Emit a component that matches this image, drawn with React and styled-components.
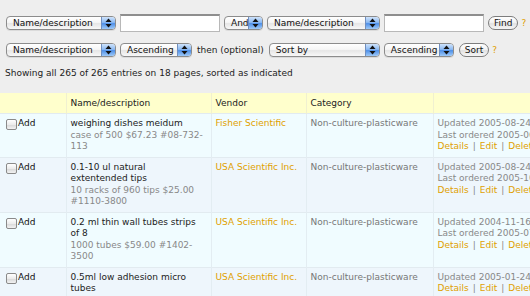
import React from 'react';
import styled, { createGlobalStyle } from 'styled-components';

const GlobalStyle = createGlobalStyle`
  html, body {
    margin: 0;
    padding: 0;
    background: #eeeeee;
    overflow: hidden;
  }
  body {
    font-family: "DejaVu Sans", Verdana, sans-serif;
    font-size: 9px;
    color: #222;
  }
`;

const Page = styled.div`
  padding-top: 14px;
  width: 530px;
`;

const Form = styled.div`
  padding-left: 6px;
  display: flex;
  flex-direction: column;
  gap: 9px;
`;

const FormRow = styled.div`
  display: flex;
  align-items: center;
  height: 18px;
  gap: 4px;
`;

const Popup = styled.div`
  display: inline-flex;
  align-items: stretch;
  box-sizing: border-box;
  width: ${({ $w }) => $w}px;
  height: 14px;
  border: 1px solid #8c8c8c;
  border-radius: 4px;
  overflow: hidden;
  background: linear-gradient(#ffffff, #f6f6f6 45%, #e6e6e6 55%, #f8f8f8);
  box-shadow: 0 1px 0 rgba(0, 0, 0, 0.08);
  flex-shrink: 0;
`;

const PopupLabel = styled.span`
  flex: 1;
  padding-left: 6px;
  line-height: 12px;
  white-space: nowrap;
  overflow: hidden;
  color: #111;
`;

const PopupArrow = styled.span`
  width: 13px;
  display: flex;
  align-items: center;
  justify-content: center;
  border-left: 1px solid #6f8fc0;
  background: linear-gradient(#cfe3fb, #8cbaf3 45%, #4f90e8 55%, #9fcaf8);
`;

const TextBox = styled.div`
  box-sizing: border-box;
  width: ${({ $w }) => $w}px;
  height: 18px;
  background: #fff;
  border: 1px solid #b8b8b8;
  border-top: 2px solid #8e8e8e;
  flex-shrink: 0;
`;

const PillButton = styled.div`
  box-sizing: border-box;
  height: 14px;
  padding: 0 5px;
  border: 1px solid #7d7d7d;
  border-radius: 7px;
  line-height: 12px;
  background: linear-gradient(#ffffff, #f3f3f3 45%, #e2e2e2 55%, #f6f6f6);
  color: #111;
  margin-left: ${({ $ml }) => $ml || 0}px;
`;

const Help = styled.span`
  color: #e0a000;
  margin-left: -1px;
`;

const Plain = styled.span`
  color: #222;
  white-space: nowrap;
  margin: 0 1px;
`;

const Status = styled.div`
  margin-top: 8px;
  padding-left: 5px;
  line-height: 12px;
`;

const Table = styled.table`
  margin-top: 14px;
  border-collapse: collapse;
  table-layout: fixed;
  width: 580px;
`;

const HeadCell = styled.th`
  background: #ffffcc;
  text-align: left;
  font-weight: normal;
  color: #222;
  height: 20px;
  padding: 0 4px;
  line-height: 12px;
  border-left: 1px solid #f0f0d0;
  &:first-child {
    border-left: none;
  }
`;

const Row = styled.tr`
  background: ${({ $alt }) => ($alt ? '#eef6fc' : '#f0fcff')};
  border-top: 1px solid #e2ebf0;
`;

const Cell = styled.td`
  vertical-align: top;
  padding: 4px ${({ $pr }) => $pr || 4}px 4px 4px;
  line-height: 11.5px;
  color: ${({ $tone }) => $tone || '#222'};
  border-left: 1px solid #e3edf2;
  white-space: ${({ $nowrap }) => ($nowrap ? 'nowrap' : 'normal')};
  overflow: hidden;
  &:first-child {
    border-left: none;
    padding-left: 6px;
  }
`;

const AddLabel = styled.label`
  display: flex;
  align-items: flex-start;
  gap: 1px;
  color: #111;
`;

const CheckBox = styled.span`
  box-sizing: border-box;
  width: 11px;
  height: 11px;
  margin-top: 1px;
  border: 1px solid #8a8a8a;
  border-radius: 2px;
  background: linear-gradient(#ffffff, #ececec 50%, #d9d9d9 55%, #f2f2f2);
`;

const Desc = styled.div`
  color: #888;
`;

const Link = styled.a`
  color: #e0a000;
  text-decoration: none;
`;

const Sep = styled.span`
  color: #888;
  margin: 0 4px;
`;

const Arrows = () => (
  <svg width="7" height="10" viewBox="0 0 7 10">
    <path d="M3.5 0.5 L6.5 4 L0.5 4 Z" fill="#111" />
    <path d="M3.5 9.5 L6.5 6 L0.5 6 Z" fill="#111" />
  </svg>
);

const Select = ({ w, children }) => (
  <Popup $w={w}>
    <PopupLabel>{children}</PopupLabel>
    <PopupArrow>
      <Arrows />
    </PopupArrow>
  </Popup>
);

const items = [
  {
    name: 'weighing dishes meidum',
    desc: 'case of 500 $67.23 #08-732-113',
    vendor: 'Fisher Scientific',
    updated: 'Updated 2005-08-24',
    ordered: 'Last ordered 2005-06-13',
  },
  {
    name: '0.1-10 ul natural extentended tips',
    desc: '10 racks of 960 tips $25.00 #1110-3800',
    vendor: 'USA Scientific Inc.',
    updated: 'Updated 2005-08-24',
    ordered: 'Last ordered 2005-10-05',
  },
  {
    name: '0.2 ml thin wall tubes strips of 8',
    desc: '1000 tubes $59.00 #1402-3500',
    vendor: 'USA Scientific Inc.',
    updated: 'Updated 2004-11-16',
    ordered: 'Last ordered 2005-07-21',
  },
  {
    name: '0.5ml low adhesion micro tubes',
    desc: '500 $14.00 #1405-2600',
    vendor: 'USA Scientific Inc.',
    updated: 'Updated 2005-01-24',
    ordered: null,
  },
];

const App = () => {
  return (
    <Page>
      <GlobalStyle />
      <Form>
        <FormRow>
          <Select w={110}>Name/description</Select>
          <TextBox $w={100} />
          <Select w={39}>And</Select>
          <Select w={113}>Name/description</Select>
          <TextBox $w={100} />
          <PillButton>Find</PillButton>
          <Help>?</Help>
        </FormRow>
        <FormRow>
          <Select w={110}>Name/description</Select>
          <Select w={72}>Ascending</Select>
          <Plain>then (optional)</Plain>
          <Select w={111}>Sort by</Select>
          <Select w={70}>Ascending</Select>
          <PillButton $ml={1}>Sort</PillButton>
          <Help>?</Help>
        </FormRow>
      </Form>
      <Status>Showing all 265 of 265 entries on 18 pages, sorted as indicated</Status>
      <Table>
        <colgroup>
          <col style={{ width: 66 }} />
          <col style={{ width: 145 }} />
          <col style={{ width: 95 }} />
          <col style={{ width: 127 }} />
          <col style={{ width: 147 }} />
        </colgroup>
        <thead>
          <tr>
            <HeadCell />
            <HeadCell>Name/description</HeadCell>
            <HeadCell>Vendor</HeadCell>
            <HeadCell>Category</HeadCell>
            <HeadCell />
          </tr>
        </thead>
        <tbody>
          {items.map((item, i) => (
            <Row key={i} $alt={i % 2 === 1}>
              <Cell>
                <AddLabel>
                  <CheckBox />
                  Add
                </AddLabel>
              </Cell>
              <Cell $pr={7}>
                <div>{item.name}</div>
                <Desc>{item.desc}</Desc>
              </Cell>
              <Cell>
                <Link href="#">{item.vendor}</Link>
              </Cell>
              <Cell $tone="#777">Non-culture-plasticware</Cell>
              <Cell $tone="#888" $nowrap>
                <div>{item.updated}</div>
                {item.ordered && <div>{item.ordered}</div>}
                <div>
                  <Link href="#">Details</Link>
                  <Sep>|</Sep>
                  <Link href="#">Edit</Link>
                  <Sep>|</Sep>
                  <Link href="#">Delete</Link>
                </div>
              </Cell>
            </Row>
          ))}
        </tbody>
      </Table>
    </Page>
  );
};

export default App;
